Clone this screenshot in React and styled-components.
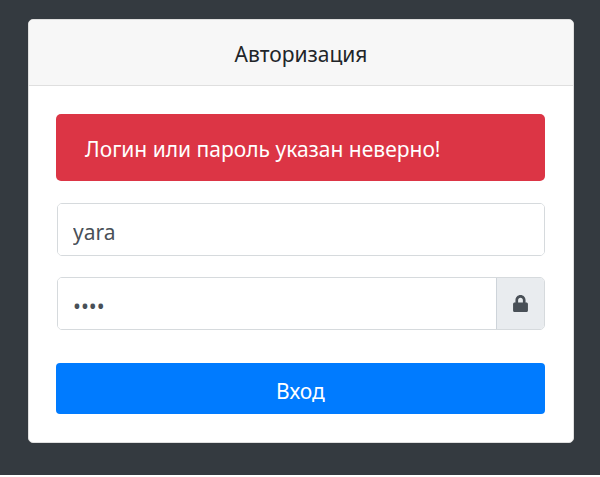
import React from "react";
import styled, { createGlobalStyle } from "styled-components";

const Global = createGlobalStyle`
  * { box-sizing: border-box; }
  html, body { margin: 0; background: #fff; }
  body { font-family: "Noto Sans", "Open Sans", sans-serif; color: #212529; overflow: hidden; }
`;
const Page = styled.main`
  height: 475px;
  padding: 19px 26px 0 28px;
  background: #343a40;
`;
const Card = styled.form`
  width: 546px;
  height: 424px;
  background: #fff;
  border: 1px solid #dfdfdf;
  border-radius: 5px;
  overflow: hidden;
`;
const Header = styled.header`
  height: 66px;
  border-bottom: 1px solid #dfdfdf;
  background: #f7f7f7;
  text-align: center;
  line-height: 69px;
  font-size: 21px;
`;
const Label = styled.span`
  display: inline-block;
  white-space: nowrap;
  letter-spacing: ${(p) => p.$spacing || "0"};
`;
const Body = styled.div`
  display: flex;
  flex-direction: column;
  padding: 28px 28px 0 27px;
`;
const Alert = styled.div`
  height: 67px;
  padding-left: 29px;
  border-radius: 5px;
  background: #dc3545;
  color: #fff;
  font-size: 21px;
  line-height: 70px;
`;
const Field = styled.div`
  display: flex;
  height: 53px;
  margin: ${(p) => p.$top} 0 0 1px;
  border: 1px solid #d6dadd;
  border-radius: 5px;
  overflow: hidden;
`;
const Input = styled.input`
  flex: 1;
  min-width: 0;
  border: 0;
  outline: 0;
  padding: 4px 15px 0;
  background: #fff;
  color: #495057;
  font: 21px "Noto Sans", sans-serif;
`;
const Addon = styled.span`
  display: flex;
  align-items: center;
  justify-content: center;
  width: 48px;
  border-left: 1px solid #ced4da;
  background: #e9ecef;
  color: #495057;
`;
const Button = styled.button`
  height: 51px;
  margin-top: 33px;
  padding: 4px 0 0;
  border: 0;
  border-radius: 4px;
  background: #007bff;
  color: #fff;
  font: 21px "Noto Sans", sans-serif;
`;

export default function App() {
  return (
    <Page>
      <Global />
      <Card>
        <Header><Label>Авторизация</Label></Header>
        <Body>
          <Alert><Label>Логин или пароль указан неверно!</Label></Alert>
          <Field $top="22px"><Input defaultValue="yara" /></Field>
          <Field $top="21px">
            <Input type="password" defaultValue="yara" />
            <Addon>
              <svg width="15" height="17" viewBox="0 0 448 512" fill="currentColor">
                <path d="M400 224h-24v-72C376 68.200 307.800 0 224 0S72 68.200 72 152v72H48c-26.500 0-48 21.500-48 48v192c0 26.500 21.500 48 48 48h352c26.500 0 48-21.500 48-48V272c0-26.500-21.500-48-48-48zm-104 0H152v-72c0-39.700 32.300-72 72-72s72 32.300 72 72v72z" />
              </svg>
            </Addon>
          </Field>
          <Button type="button"><Label>Вход</Label></Button>
        </Body>
      </Card>
    </Page>
  );
}
